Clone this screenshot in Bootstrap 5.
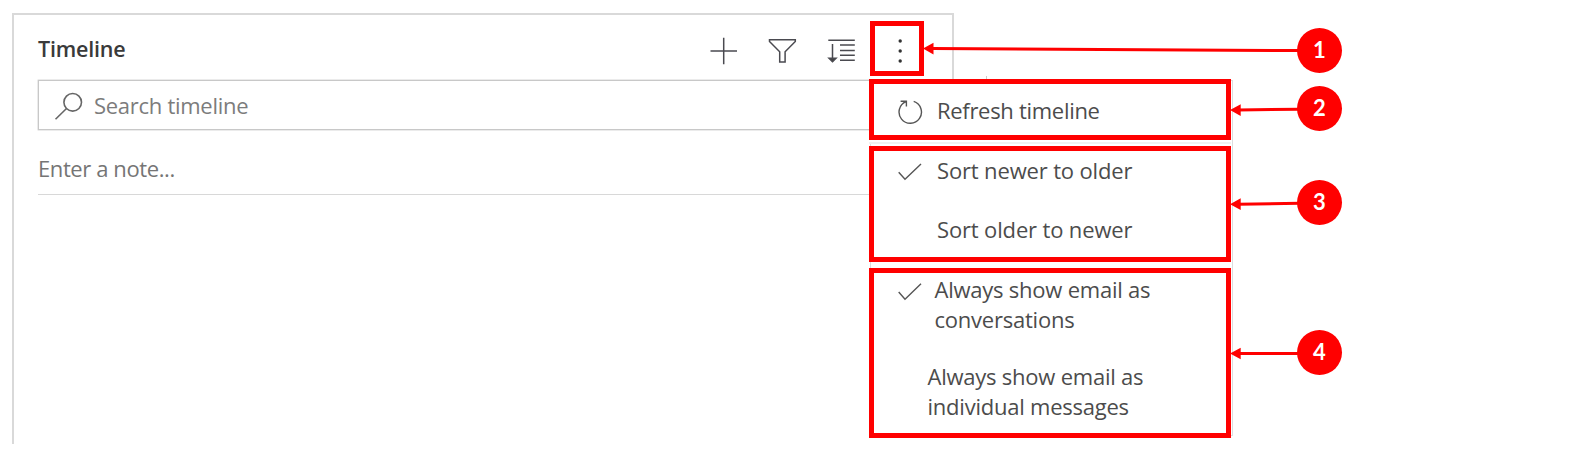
<!DOCTYPE html>
<html lang="en">
<head>
<meta charset="utf-8">
<title>Timeline</title>
<link href="https://cdn.jsdelivr.net/npm/bootstrap@5.3.0/dist/css/bootstrap.min.css" rel="stylesheet">
<script src="https://cdn.jsdelivr.net/npm/bootstrap@5.3.0/dist/js/bootstrap.bundle.min.js"></script>
<style>
body{width:1580px;height:453px;overflow:hidden;font-family:"Open Sans","Noto Sans",sans-serif;font-size:22px;line-height:30px;color:#4c4c4c;letter-spacing:-.2px;background:#fff}
svg{display:block;flex:none}
.timeline{width:942px;height:431px;margin:13px 0 0 12px;border:2px solid #d9d9d9;border-bottom:0;border-right:0;padding:0 26px 0 24px}
.head{height:65px;margin-right:-26px;padding-right:24px;border-right:2px solid #d9d9d9}
.title{font-size:21.500px;font-weight:600;color:#3a3a3a;line-height:30px;margin-top:19px;letter-spacing:-.2px}
.tools{margin-top:6px}
.search{height:50px;border:1px solid #c8c8c8;box-shadow:0 0 0 .4px #ccc;color:#7c7c7c;padding-left:15px;letter-spacing:-.28px}
.search span{padding-left:11px}
.note{height:65px;border-bottom:1px solid #d8d8d8;color:#757575;padding-top:23px;letter-spacing:-.4px}
.menu{left:856px;top:65px;width:363px;height:356px;border:1px solid #ddd;gap:6px}
.group{position:relative;left:-2px;top:-2px;width:362px;flex:none;border:5px solid red;padding-left:23px}
.refresh-group{height:61px;padding-top:10.500px;box-shadow:0 2px 0 #fff,0 4px 0 #f1f1f1;letter-spacing:-.3px}
.refresh-group svg{margin-top:1px}
.sort-group{height:116px;padding-top:3.500px;gap:29px;letter-spacing:-.15px}
.email-group{height:170px;padding-top:.500px;gap:27px;letter-spacing:-.23px}
.label-wide{padding-left:14px}
.label-mid{padding-left:11.500px}
.label-indent{padding-left:40px}
.label-indent-sm{padding-left:30.500px}
.mark-box{left:856px;top:6px;width:54px;height:55px;border:5px solid red}
.num{width:45px;height:45px;left:1297px;background:red;color:#fff;font-family:Lato,"Open Sans",sans-serif;font-weight:700;font-size:22px;letter-spacing:0;padding-bottom:1px}
</style>
</head>
<body class="position-relative">
<main class="timeline position-relative">
  <header class="head d-flex justify-content-between">
    <h1 class="title mb-0">Timeline</h1>
    <svg class="tools" width="224" height="50" viewBox="704 21 224 50" fill="none" stroke="#4a4a50" stroke-width="1.500">
      <path d="M710.5 51h26.500M723.700 37.800v26.500"/>
      <path d="M769.500 39.800h25.800v1.700l-10.200 10.200v10.300h-5.400v-10.300l-10.200-10.200z"/>
      <path d="M828.300 40.200h26.500M840 45h14.800M840 50.400h14.800M840 55.300h14.800M840 60.300h14.800M832.500 44v17.500"/>
      <path d="M829 58.300l3.500 3.500 3.500-3.500z" fill="#444"/>
      <g fill="#333" stroke="none"><circle cx="900.200" cy="41" r="1.700"/><circle cx="900.200" cy="51" r="1.700"/><circle cx="900.200" cy="61" r="1.700"/></g>
    </svg>
  </header>
  <div class="search d-flex align-items-center">
    <svg width="29" height="30" viewBox="0 0 29 30" fill="none" stroke="#666" stroke-width="1.600"><circle cx="18.700" cy="12.300" r="8.800"/><path d="M12.500 18.500L1.500 29.200"/></svg>
    <span>Search timeline</span>
  </div>
  <div class="note">Enter a note...</div>

  <div class="menu position-absolute d-flex flex-column bg-white">
    <div class="group refresh-group bg-white">
      <div class="d-flex">
        <svg width="26" height="30" viewBox="0 0 26 30" fill="none" stroke="#555" stroke-width="1.400"><path d="M16.700 5.400A11.200 11.200 0 1 1 9 5.700M3.600 5.200H9.400V10.500"/></svg>
        <span class="label-wide">Refresh timeline</span>
      </div>
    </div>
    <div class="group sort-group bg-white d-flex flex-column">
      <div class="d-flex">
        <svg width="26" height="30" viewBox="0 0 26 30" fill="none" stroke="#555" stroke-width="1.400"><path d="M1.700 17.200L8 24.300L24 9"/></svg>
        <span class="label-wide">Sort newer to older</span>
      </div>
      <div class="label-indent">Sort older to newer</div>
    </div>
    <div class="group email-group bg-white d-flex flex-column">
      <div class="d-flex">
        <svg width="26" height="30" viewBox="0 0 26 30" fill="none" stroke="#555" stroke-width="1.400"><path d="M1.700 18L8 25.200L24 9.800"/></svg>
        <span class="label-mid">Always show email as<br>conversations</span>
      </div>
      <div class="label-indent-sm">Always show email as<br>individual messages</div>
    </div>
  </div>
  <div class="mark-box position-absolute"></div>
</main>

<!-- callouts over the panel -->
<svg class="position-absolute top-0 start-0" width="1580" height="453" viewBox="0 0 1580 453" fill="red">
  <path d="M986.500 76v3" stroke="#ccc"/>
  <g stroke="red" stroke-width="3"><path d="M932 48.600L1300 50.600M1238 110L1300 109.200M1238 204.200L1300 203.200M1238 353.500H1300"/></g>
  <path d="M923 48.500L933.500 42.700V54.500zM1230 110L1240.700 104.200V116zM1230 204.200L1240.700 198.300V210zM1230 353.500L1240.700 347.700V359.300z"/>
</svg>
<div class="num position-absolute rounded-circle d-flex align-items-center justify-content-center" style="top:28px">1</div>
<div class="num position-absolute rounded-circle d-flex align-items-center justify-content-center" style="top:86px">2</div>
<div class="num position-absolute rounded-circle d-flex align-items-center justify-content-center" style="top:180px">3</div>
<div class="num position-absolute rounded-circle d-flex align-items-center justify-content-center" style="top:330px">4</div>
</body>
</html>
